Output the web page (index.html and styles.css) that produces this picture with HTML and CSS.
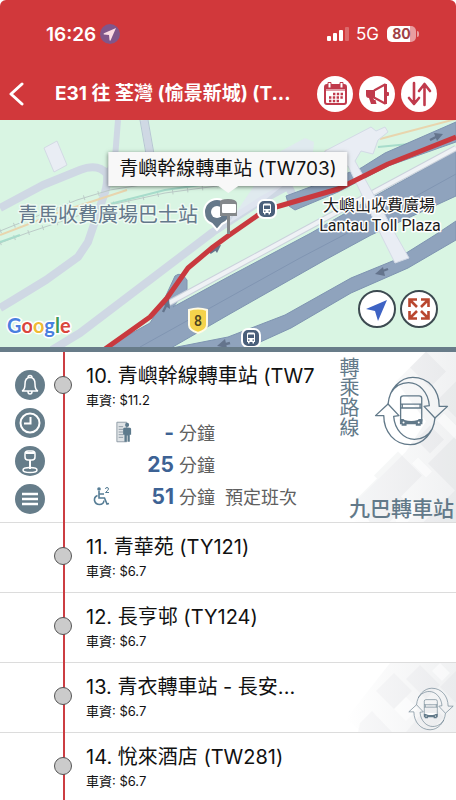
FILE: index.html
```html
<!DOCTYPE html>
<html lang="zh-Hant">
<head>
<meta charset="utf-8">
<meta name="viewport" content="width=device-width, initial-scale=1">
<title>E31 往 荃灣</title>
<link rel="stylesheet" href="styles.css">
</head>
<body>
<svg class="defs" aria-hidden="true">
  <symbol id="interchange" viewBox="436 76 226 212">
    <g fill="none" stroke="currentColor" stroke-linejoin="round">
      <path d="M478 161C482 115 515 80 553 80C600 80 633 118 633 168L658 168L620 203L587 168L603 166C600 125 572 96 540 96C518 96 498 108 486 128"/>
      <path d="M620 203C616 249 583 284 545 284C498 284 465 246 465 196L440 196L478 161L511 196L495 198C498 239 526 268 558 268C580 268 600 256 612 236"/>
      <path d="M516 214V144Q516 136 524 136H572Q580 136 580 144V214"/>
      <path d="M516 161H580M516 173H580M521 161V173M575 161V173"/>
    </g>
    <path fill="currentColor" d="M514 206H582V222H577V227H562V222H534V227H519V222H514Z"/>
    <path fill="#fff" d="M520 202H576L568 209Q548 215 528 209Z"/>
    <circle cx="525" cy="217" r="3" fill="#fff"/><circle cx="571" cy="217" r="3" fill="#fff"/>
  </symbol>
  <symbol id="busstop" viewBox="0 0 20 20">
    <rect x="1" y="1" width="18" height="18" rx="6" fill="#4a5f7a" stroke="#fff" stroke-width="2"/>
    <path fill="#fff" d="M6 6Q6 4.500 7.500 4.500H12.500Q14 4.500 14 6V14H13V15.500H11.500V14H8.500V15.500H7V14H6Z"/>
    <path fill="#4a5f7a" d="M7 6.500H13V10H7ZM7 11.500H8.500V12.700H7ZM11.500 11.500H13V12.700H11.500Z"/>
  </symbol>
</svg>

<div class="app">
  <header class="top">
    <div class="status">
      <span class="time">16:26</span>
      <svg class="loc" viewBox="0 0 20 20"><circle cx="10" cy="10" r="10" fill="#80568a"/><path fill="#fbdce4" d="M16 4L10.500 16.500Q9.700 17 9.500 16L9 11L4 10.500Q3 10 4 9.300Z"/></svg>
      <span class="space"></span>
      <svg class="signal" viewBox="0 0 24 16"><g fill="#fff"><rect x="1" y="10" width="4" height="5" rx="1"/><rect x="7" y="7" width="4" height="8" rx="1"/><rect x="13" y="4" width="4" height="11" rx="1"/><rect x="19" y="1" width="4" height="14" rx="1" opacity=".25"/></g></svg>
      <span class="net">5G</span>
      <span class="battery">80</span>
    </div>
    <nav class="bar">
      <button class="back" aria-label="返回"><svg viewBox="0 0 16 24"><path d="M14 2L3 12L14 22" fill="none" stroke="#fff" stroke-width="3" stroke-linecap="round" stroke-linejoin="round"/></svg></button>
      <h1>E31 往 荃灣 (愉景新城) (T...</h1>
      <div class="actions">
        <button class="round" aria-label="時間表"><svg viewBox="0 0 36 36"><g fill="none" stroke="#c03a4c" stroke-width="2"><rect x="8" y="9" width="21" height="19" rx="2"/><path d="M8 14H29" stroke-width="1"/></g><path fill="#c03a4c" d="M8 9H29V13H8Z"/><path fill="#fff" stroke="#c03a4c" d="M11 6.500H14V12H11ZM23 6.500H26V12H23Z"/><path d="M16 18H26M12 21.500H26M12 25H22" stroke="#c03a4c" stroke-width="2.400" stroke-dasharray="2.400 1.400"/></svg></button>
        <button class="round" aria-label="公告"><svg viewBox="0 0 36 36"><path fill="#c03a4c" d="M7 14H16V22H10Q7 22 7 19ZM10 22H14.500L15 24H16.500L17.500 28H12Z"/><path fill="none" stroke="#c03a4c" stroke-width="2" stroke-linejoin="round" d="M15 14.500L26 8.500V27.500L15 21.500M27 8V28"/><rect x="27" y="16" width="3" height="4" rx="1" fill="#c03a4c"/></svg></button>
        <button class="round" aria-label="對調方向"><svg viewBox="0 0 36 36"><path fill="none" stroke="#c03a4c" stroke-width="2.600" stroke-linecap="round" stroke-linejoin="round" d="M13 7V28M8 22L13 28L18 22M23.500 29V9M18 15L23.500 8L29 15"/></svg></button>
      </div>
    </nav>
  </header>

  <section class="map" aria-label="地圖">
    <svg class="canvas" viewBox="0 0 456 227" preserveAspectRatio="xMidYMid slice">
      <rect width="456" height="227" fill="#d9f5e3"/>
      <g fill="none" stroke="#cfd8e4" stroke-linejoin="round">
        <path stroke-width="8" d="M0 88L43 65L80 50Q98 43 107 54Q108 66 103 78L88 122L78 137L46 160L10 182L0 188"/>
        <path stroke-width="6" d="M118 0L115 38L107 56"/>
        <path stroke-width="7" d="M144 0L150 34"/>
        <path stroke-width="8" d="M52 230L80 213L213 112L262 80L288 66L294 77"/>
      </g>
      <path fill="none" stroke="#b8c4d4" d="M140 0L146 34M148 0L154 34"/>
      <path fill="#e9edf4" stroke="#d3dae4" d="M44 28L57 21L67 45L54 52Z"/>
      <g fill="none">
        <path stroke="#bccbc8" d="M0 111L77 80L110 70L160 62M0 123L27 113L110 85L165 73L217 66"/>
        <path stroke="#bccbc8" stroke-width="5" stroke-dasharray="1 14" d="M0 111L77 80L110 70M0 123L27 113L110 85L165 73L217 66"/>
        <path stroke="#e8d5ae" stroke-width="2" d="M0 115L60 92L127 70M325 31L345 28M380 19L456 -1"/>
        <path stroke="#a7dccb" stroke-width="2" d="M0 122L20 115M110 84L165 70L200 65M378 27L420 23L456 10"/>
      </g>
      <path fill="#e1e7f1" d="M228 104L258 60L281 31L305 18L314 22L313 32L285 64L260 84Z" opacity=".8"/>
      <g fill="#8fa3bd" stroke="#7e94b1">
        <path d="M286 76L361 48L385 33L456 2V22L388 46L338 72L295 90L289 86Z"/>
        <path d="M105 228L150 203L163 182L175 156Q181 151 187 160V170L173 187L228 157L311 113L375 76L456 31V76L371 115L325 140L228 195L171 228Z"/>
        <path d="M172 228L228 217L285 195L351 158L395 140L435 115L456 101V120L408 148L351 173L291 208L247 228Z"/>
      </g>
      <path fill="none" stroke="#8095b2" d="M140 227L228 178L300 138L380 96L456 54"/>
      <path fill="none" stroke="#cbd2dc" stroke-width="6" d="M169 183L228 151L300 112L456 28"/>
      <path fill="none" stroke="#eff2f5" stroke-width="4" d="M169 183L228 151L300 112L456 28"/>
      <path fill="#e9edf4" stroke="#d3dae6" d="M325 31L371 7L376 11L385 7L388 12L378 20L373 34L361 31L355 41L396 115L409 138L395 143L381 115L348 46L320 50Z"/>
      <g fill="none" stroke="#64748c" stroke-width="2.400">
        <path d="M430 20L438 16"/><path d="M210 133L216 129"/><path d="M163 192L167 184"/><path d="M388 149L380 152"/><path d="M230 223L222 225"/>
      </g>
      <g fill="#64748c"><path d="M434 13L443 14L437 21Z"/><path d="M212 126L221 125L217 133Z"/><path d="M161 183L169 179L170 189Z"/><path d="M383 147L375 154L385 156Z"/><path d="M225 219L217 226L227 228Z"/></g>
      <path fill="none" stroke="#c9393e" stroke-width="5" stroke-linejoin="round" d="M105 229L150 197L167 178L188 148L213 127L228 116L261 93L276 87L338 69L388 44L456 17"/>
      <use href="#busstop" x="257" y="79" width="20" height="20"/>
      <use href="#busstop" x="241" y="208" width="20" height="20"/>
      <path fill="#65788a" stroke="#fff" stroke-width="2" d="M217 79A13 13 0 0 1 230 92Q230 101 222 104L217 110L212 104Q204 101 204 92A13 13 0 0 1 217 79Z"/>
      <circle cx="217" cy="92" r="6" fill="#fff"/>
      <path fill="#84888b" d="M227 94H230V114H227ZM220 82Q220 79 228 79Q236 79 237 83V96H220Z"/>
      <rect x="222" y="84" width="14" height="9" rx="1" fill="#fff"/>
      <path fill="#f4d34c" stroke="#fffbe5" stroke-width="2" d="M189 190Q198 187 207 190V205Q207 210 198 213Q189 210 189 205Z"/>
      <text class="shield" x="198" y="206" text-anchor="middle">8</text>
      <text class="place slate" x="18" y="102">青馬收費廣場巴士站</text>
      <text class="place small" x="379" y="91" text-anchor="middle">大嶼山收費廣場</text>
      <text class="place latin" x="380" y="111" text-anchor="middle">Lantau Toll Plaza</text>
      <text class="google" x="7" y="213"><tspan fill="#4a7fe0">G</tspan><tspan fill="#d9463d">o</tspan><tspan fill="#eebb35">o</tspan><tspan fill="#4a7fe0">g</tspan><tspan fill="#3f9c5a">l</tspan><tspan fill="#d9463d">e</tspan></text>
    </svg>
    <div class="tip">青嶼幹線轉車站 (TW703)</div>
    <div class="fabs">
      <button class="fab" aria-label="定位"><svg viewBox="0 0 34 34"><path fill="#3e63c4" d="M27 8L18 29L15 19L6 17Z"/></svg></button>
      <button class="fab" aria-label="全螢幕"><svg viewBox="0 0 34 34"><g fill="none" stroke="#b9472f" stroke-width="2.600"><path d="M7.500 15V7.500H15M8 8L15 15M19 7.500H26.500V15M26 8L19 15M7.500 19V26.500H15M8 26L15 19M19 26.500H26.500V19M26 26L19 19"/></g></svg></button>
    </div>
  </section>

  <main class="stops">
    <article class="stop current">
      <div class="tools">
        <button class="tool" aria-label="提示"><svg viewBox="0 0 30 30"><path d="M7 21Q10 20 10 14Q10 7.500 15 7.500Q20 7.500 20 14Q20 20 23 21ZM13 7.500Q13 5.500 15 5.500Q17 5.500 17 7.500M13 21.500Q13 24 15 24Q17 24 17 21.500"/></svg></button>
        <button class="tool" aria-label="班次"><svg viewBox="0 0 30 30"><circle cx="15" cy="15" r="9.500" stroke-width="2"/><path stroke-width="2" d="M15.500 9V15.500H9"/></svg></button>
        <button class="tool" aria-label="車站"><svg viewBox="0 0 30 30"><rect x="10" y="5" width="10" height="9" rx="3"/><path d="M11 7H19M15 14V23" stroke-width="2"/><ellipse cx="15" cy="24" rx="7" ry="2.500"/></svg></button>
        <button class="tool" aria-label="選單"><svg viewBox="0 0 30 30"><path stroke-width="2.600" d="M7 10H23M7 15H23M7 20H23"/></svg></button>
      </div>
      <div class="rail"><i class="dot"></i></div>
      <div class="info">
        <h2>10. 青嶼幹線轉車站 (TW7</h2>
        <p class="fare">車資: $11.2</p>
        <ul class="etas">
          <li><span class="mark mid"><svg viewBox="0 0 18 24"><path fill="#dfe3e6" stroke="#8795a0" d="M1 1H12V23H1Z"/><path stroke="#8795a0" d="M3 6H8M3 9H8M3 12H8M3 15H8M3 18H8"/><path fill="#5d7a8c" d="M8 8.500Q8 7 12.500 7Q17 7 17 8.500V15H15.500V23H13V16H12V23H9.500V15H8Z"/><circle cx="12.500" cy="4" r="2.300" fill="#5d7a8c"/></svg></span><b>-</b><span>分鐘</span></li>
          <li><span class="mark"></span><b>25</b><span>分鐘</span></li>
          <li><span class="mark"><svg viewBox="0 0 18 20"><g fill="none" stroke="#557c94" stroke-width="1.600"><path d="M6 5V12H11.500L14 18L16 17.500M6 8H11"/><path d="M4.500 9.500Q1 11 1.500 14.500Q2.500 18.500 6.500 18.500Q10.500 18.500 11 14.500"/></g><circle cx="6" cy="3" r="1.800" fill="#557c94"/><path fill="none" stroke="#557c94" d="M12.500 3Q12.500 1.500 14 1.500Q15.500 1.500 15.500 3Q15.500 4 12.500 6.500H16"/></svg></span><b>51</b><span>分鐘</span><span class="note">預定班次</span></li>
        </ul>
      </div>
      <a class="transfer" href="#transfer">
        <svg class="pattern" viewBox="0 0 110 171" preserveAspectRatio="xMaxYMid slice">
          <defs>
            <linearGradient id="fade" x1="0" y1="0" x2="1" y2="0"><stop offset="0" stop-color="#68727e" stop-opacity="0"/><stop offset="1" stop-color="#68727e" stop-opacity=".1"/></linearGradient>
          </defs>
          <path fill="url(#fade)" d="M80 0H110V171H10L0 160L60 100L80 70L50 30Z"/>
          <g fill="#68727e" opacity=".05">
            <path d="M52 100L76 124L52 148L28 124ZM84 74L98 88L84 102L70 88Z"/>
            <path d="M34 124L62 152L43 171H24L10 148Z"/>
            <path d="M110 84L82 112L110 140Z"/>
            <path d="M80 0L100 20L84 36L64 16ZM110 30L92 48L110 66ZM110 138L77 171H110Z"/>
          </g>
          <path fill="#fff" opacity=".5" d="M72 106L86 120L80 126L66 112ZM98 62L110 74V88L91 69ZM62 146L74 158L61 171H50L48 160Z"/>
        </svg>
        <span class="vert">轉乘路線</span>
        <svg class="swap"><use href="#interchange"/></svg>
        <span class="hub">九巴轉車站</span>
      </a>
    </article>

    <article class="stop"><div class="rail"><i class="dot"></i></div><div class="info"><h2>11. 青華苑 (TY121)</h2><p class="fare">車資: $6.7</p></div></article>
    <article class="stop"><div class="rail"><i class="dot"></i></div><div class="info"><h2>12. 長亨邨 (TY124)</h2><p class="fare">車資: $6.7</p></div></article>
    <article class="stop">
      <div class="rail"><i class="dot"></i></div>
      <div class="info"><h2>13. 青衣轉車站 - 長安...</h2><p class="fare">車資: $6.7</p></div>
      <div class="hint">
        <svg class="tiles" viewBox="0 0 110 69" preserveAspectRatio="xMaxYMid slice">
          <path fill="url(#fade)" d="M44 0H110V69H16L0 56Z"/>
          <g fill="#68727e" opacity=".04"><path d="M48 10L66 28L48 46L30 28ZM74 2L94 22L80 36L60 16ZM26 48L46 69H12L14 60ZM110 8L94 24L110 40ZM84 40L98 54L83 69H60Z"/></g>
          <path fill="#fff" opacity=".5" d="M60 34L72 46L60 58L48 46ZM94 0L104 10L96 18L86 8Z"/>
        </svg>
        <svg class="swap mini"><use href="#interchange"/></svg>
      </div>
    </article>
    <article class="stop"><div class="rail"><i class="dot"></i></div><div class="info"><h2>14. 悅來酒店 (TW281)</h2><p class="fare">車資: $6.7</p></div></article>
  </main>
</div>
</body>
</html>
```
FILE: styles.css
```css
* { box-sizing: border-box; }
body {
  margin: 0;
  background: #fff;
  color: #111;
  font-family: Inter, "Noto Sans CJK TC", sans-serif;
}
h1, h2, p, ul { margin: 0; padding: 0; }
svg { display: block; }
button {
  padding: 0;
  border: 0;
  background: none;
  font: inherit;
  cursor: pointer;
}
.defs { position: absolute; width: 0; height: 0; }
.app { display: flex; flex-direction: column; height: 100vh; }

/* Status bar and title */
.top { flex: none; background: #d1383b; color: #fff; border-radius: 6px 6px 0 0; }
.status {
  display: flex;
  align-items: center;
  height: 68px;
  padding: 0 40px 0 46px;
}
.time { font-size: 19px; font-weight: 600; }
.loc { width: 20px; height: 20px; margin-left: 4px; }
.space { flex: 1; }
.signal { width: 24px; height: 16px; }
.net { margin: 0 8px 0 6px; font-size: 17px; }
.battery {
  position: relative;
  width: 29px;
  height: 16px;
  border-radius: 5px;
  background: linear-gradient(90deg, #fff 80%, #e89da0 80%);
  color: #a04045;
  font-size: 14px;
  font-weight: 700;
  line-height: 16px;
  text-align: center;
}
.battery::after {
  content: "";
  position: absolute;
  right: -3px;
  top: 5px;
  width: 2px;
  height: 6px;
  border-radius: 0 2px 2px 0;
  background: #e89da0;
}
.bar { display: flex; align-items: center; height: 52px; padding: 0 19px 0 8px; }
.back { flex: none; width: 47px; height: 40px; }
.back svg { width: 16px; height: 24px; }
h1 {
  flex: 1;
  min-width: 0;
  overflow: hidden;
  white-space: nowrap;
  font-size: 19px;
  font-weight: 700;
  line-height: 28px;
}
.actions { display: flex; flex: none; gap: 6px; }
.round { width: 36px; height: 36px; border-radius: 50%; background: #fff; }

/* Map */
.map {
  position: relative;
  flex: none;
  height: 232px;
  border-bottom: 5px solid #687c89;
  overflow: hidden;
}
.canvas { width: 100%; height: 100%; }
.place {
  font-size: 20px;
  fill: #1b1b1b;
  stroke: #fff;
  stroke-width: 3px;
  paint-order: stroke;
  stroke-linejoin: round;
}
.slate { fill: #64788b; stroke: #eefaf3; }
.small { font-size: 16px; }
.latin { font-family: Roboto, sans-serif; font-size: 16px; }
.shield { font-family: Roboto, sans-serif; font-size: 14px; font-weight: 500; fill: #4b4320; }
.google {
  font-family: Lato, sans-serif;
  font-size: 20px;
  font-weight: 700;
  stroke: #fff;
  stroke-width: 3px;
  paint-order: stroke;
}
.tip {
  position: absolute;
  left: 50%;
  top: 32px;
  transform: translateX(-50%);
  padding: 0 11px;
  background: #f8f8f8;
  box-shadow: 0 1px 4px rgba(0, 0, 0, .5);
  color: #111;
  font-size: 19px;
  line-height: 34px;
  white-space: nowrap;
}
.tip::after {
  content: "";
  position: absolute;
  left: 50%;
  top: 100%;
  margin-left: -10px;
  border: 10px solid transparent;
  border-top: 7px solid #f8f8f8;
  border-bottom: 0;
}
.fabs { position: absolute; right: 18px; bottom: 19px; display: flex; gap: 4px; }
.fab {
  width: 38px;
  height: 38px;
  border: 2px solid #3c4a50;
  border-radius: 50%;
  background: #fff;
}

/* Stop list */
.stops { flex: 1; min-height: 0; overflow-y: auto; scrollbar-width: none; }
.stop {
  position: relative;
  display: grid;
  grid-template-columns: 46px 36px 1fr auto;
  height: 70px;
  border-bottom: 1px solid #dcdcdc;
}
.current { height: 171px; }
.tools {
  grid-column: 1;
  display: flex;
  flex-direction: column;
  gap: 8px;
  padding: 18px 0 0 15px;
}
.tool { width: 30px; height: 30px; border-radius: 50%; background: #667d8a; }
.tool svg { fill: none; stroke: #fff; stroke-width: 1.500; }
.rail {
  grid-column: 2;
  padding-top: 24px;
  background: linear-gradient(#cc3d42, #cc3d42) 17px 0 / 2px 100% no-repeat;
  margin-bottom: -1px;
}
.dot {
  display: block;
  width: 18px;
  height: 18px;
  margin-left: 8px;
  border: 1px solid #555;
  border-radius: 50%;
  background: #cbcbcb;
}
.info { grid-column: 3; min-width: 0; padding: 10px 0 0 4px; }
h2 {
  white-space: nowrap;
  font-size: 20px;
  font-weight: 400;
  line-height: 28px;
}
.fare { font-size: 13px; line-height: 20px; }
.etas { list-style: none; padding-top: 6px; }
.etas li {
  display: flex;
  align-items: center;
  height: 32px;
  color: #606060;
  font-size: 18px;
  white-space: nowrap;
}
.etas b { width: 42px; color: #3d6294; font-size: 21px; text-align: right; margin-right: 5px; }
.mark { display: flex; width: 46px; padding-left: 7px; }
.mark svg { width: 18px; height: 20px; }
.mid { padding-left: 30px; }
.mid svg { height: 24px; }
.note { margin-left: 10px; }
.transfer {
  position: relative;
  grid-column: 4;
  display: grid;
  grid-template-columns: 36px 82px;
  grid-template-rows: 140px 30px;
  padding-left: 18px;
  color: #627989;
  text-decoration: none;
}
.pattern { position: absolute; right: 0; top: 0; width: 110px; height: 170px; }
.vert {
  position: relative;
  justify-self: start;
  writing-mode: vertical-rl;
  font-size: 20px;
  line-height: 20px;
  padding-top: 5px;
}
.swap { position: relative; width: 75px; height: 70px; margin-top: 24px; stroke-width: 4; color: #627989; }
.hub {
  position: relative;
  grid-column: 1 / 3;
  justify-self: end;
  padding-right: 2px;
  font-size: 21px;
  font-weight: 500;
  line-height: 34px;
  white-space: nowrap;
}
.hint { position: relative; grid-column: 4; width: 48px; }
.tiles { position: absolute; right: 0; top: 0; width: 110px; height: 69px; }
.mini { width: 46px; height: 44px; stroke-width: 3; }
```
